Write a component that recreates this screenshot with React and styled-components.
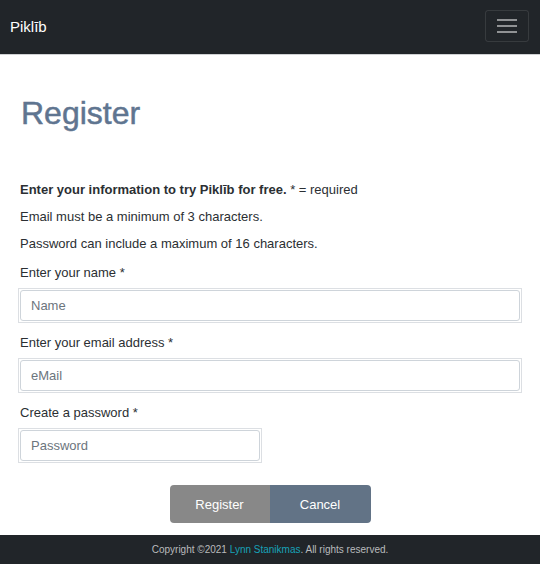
import styled, { createGlobalStyle } from "styled-components";

const GlobalStyle = createGlobalStyle`
  html, body {
    margin: 0;
    padding: 0;
    background: #fff;
    font-family: "Liberation Sans", Arial, Helvetica, sans-serif;
    color: #2b2f33;
  }
  * { box-sizing: border-box; }
`;

const Navbar = styled.nav`
  height: 55px;
  background: #212529;
  border-bottom: 1px solid #cfd1d3;
  display: flex;
  align-items: center;
  justify-content: space-between;
  padding: 0 11px 2px 10px;
`;

const Brand = styled.a`
  color: #fff;
  font-size: 15px;
  text-decoration: none;
`;

const Toggler = styled.button`
  width: 44px;
  height: 32px;
  background: transparent;
  border: 1px solid rgba(255, 255, 255, 0.1);
  border-radius: 3px;
  display: flex;
  flex-direction: column;
  align-items: center;
  justify-content: center;
  gap: 4px;
  padding: 0;
`;

const TogglerBar = styled.span`
  display: block;
  width: 20px;
  height: 2px;
  background: rgba(255, 255, 255, 0.5);
`;

const Main = styled.main`
  padding: 39px 18px 0;
  height: 480px;
`;

const Title = styled.h1`
  margin: 0 0 49px;
  padding-left: 3px;
  font-size: 32px;
  line-height: 38px;
  font-weight: normal;
  color: #5f7590;
  -webkit-text-stroke: 0.5px #5f7590;
`;

const Note = styled.p`
  margin: 0 0 9px;
  padding-left: 2px;
  font-size: 13px;
  line-height: 18px;
`;

const Field = styled.div`
  margin-top: 11px;
`;

const Label = styled.label`
  display: block;
  padding-left: 2px;
  font-size: 13px;
  line-height: 18px;
  margin-bottom: 6px;
`;

const InputFrame = styled.div`
  width: ${props => props.narrow ? "244px" : "100%"};
  border: 1px solid #dcdfe3;
  padding: 1px;
`;

const Input = styled.input`
  display: block;
  width: 100%;
  height: 31px;
  border: 1px solid #ced4da;
  border-radius: 3px;
  padding: 0 10px;
  font-family: "Liberation Sans", Arial, sans-serif;
  font-size: 13px;
  color: #495057;
  outline: none;
  &::placeholder { color: #6c757d; }
`;

const ButtonRow = styled.div`
  display: flex;
  justify-content: center;
  margin-top: 22px;
`;

const Button = styled.button`
  height: 38px;
  border: none;
  color: #fff;
  font-family: "Liberation Sans", Arial, sans-serif;
  font-size: 13px;
  background: ${props => props.variant === "cancel" ? "#627386" : "#888888"};
  border-radius: ${props => props.variant === "cancel" ? "0 4px 4px 0" : "4px 0 0 4px"};
  width: ${props => props.variant === "cancel" ? "101px" : "100px"};
`;

const Footer = styled.footer`
  height: 29px;
  background: #212529;
  display: flex;
  align-items: center;
  justify-content: center;
  font-size: 10px;
  color: #b9bbbd;
`;

const FooterLink = styled.a`
  color: #17a2b8;
  text-decoration: none;
`;

const fields = [
  { label: "Enter your name *", placeholder: "Name", type: "text" },
  { label: "Enter your email address *", placeholder: "eMail", type: "email" },
  { label: "Create a password *", placeholder: "Password", type: "password", narrow: true },
];

const App = () => (
  <>
    <GlobalStyle />
    <Navbar>
      <Brand href="#">Piklīb</Brand>
      <Toggler aria-label="Toggle navigation">
        <TogglerBar />
        <TogglerBar />
        <TogglerBar />
      </Toggler>
    </Navbar>
    <Main>
      <Title>Register</Title>
      <Note><strong>Enter your information to try Piklīb for free.</strong> * = required</Note>
      <Note>Email must be a minimum of 3 characters.</Note>
      <Note>Password can include a maximum of 16 characters.</Note>
      {fields.map(f => (
        <Field key={f.placeholder}>
          <Label>{f.label}</Label>
          <InputFrame narrow={f.narrow}>
            <Input type={f.type} placeholder={f.placeholder} />
          </InputFrame>
        </Field>
      ))}
      <ButtonRow>
        <Button>Register</Button>
        <Button variant="cancel">Cancel</Button>
      </ButtonRow>
    </Main>
    <Footer>
      <span>Copyright ©2021 <FooterLink href="#">Lynn Stanikmas</FooterLink>. All rights reserved.</span>
    </Footer>
  </>
);

export default App;
